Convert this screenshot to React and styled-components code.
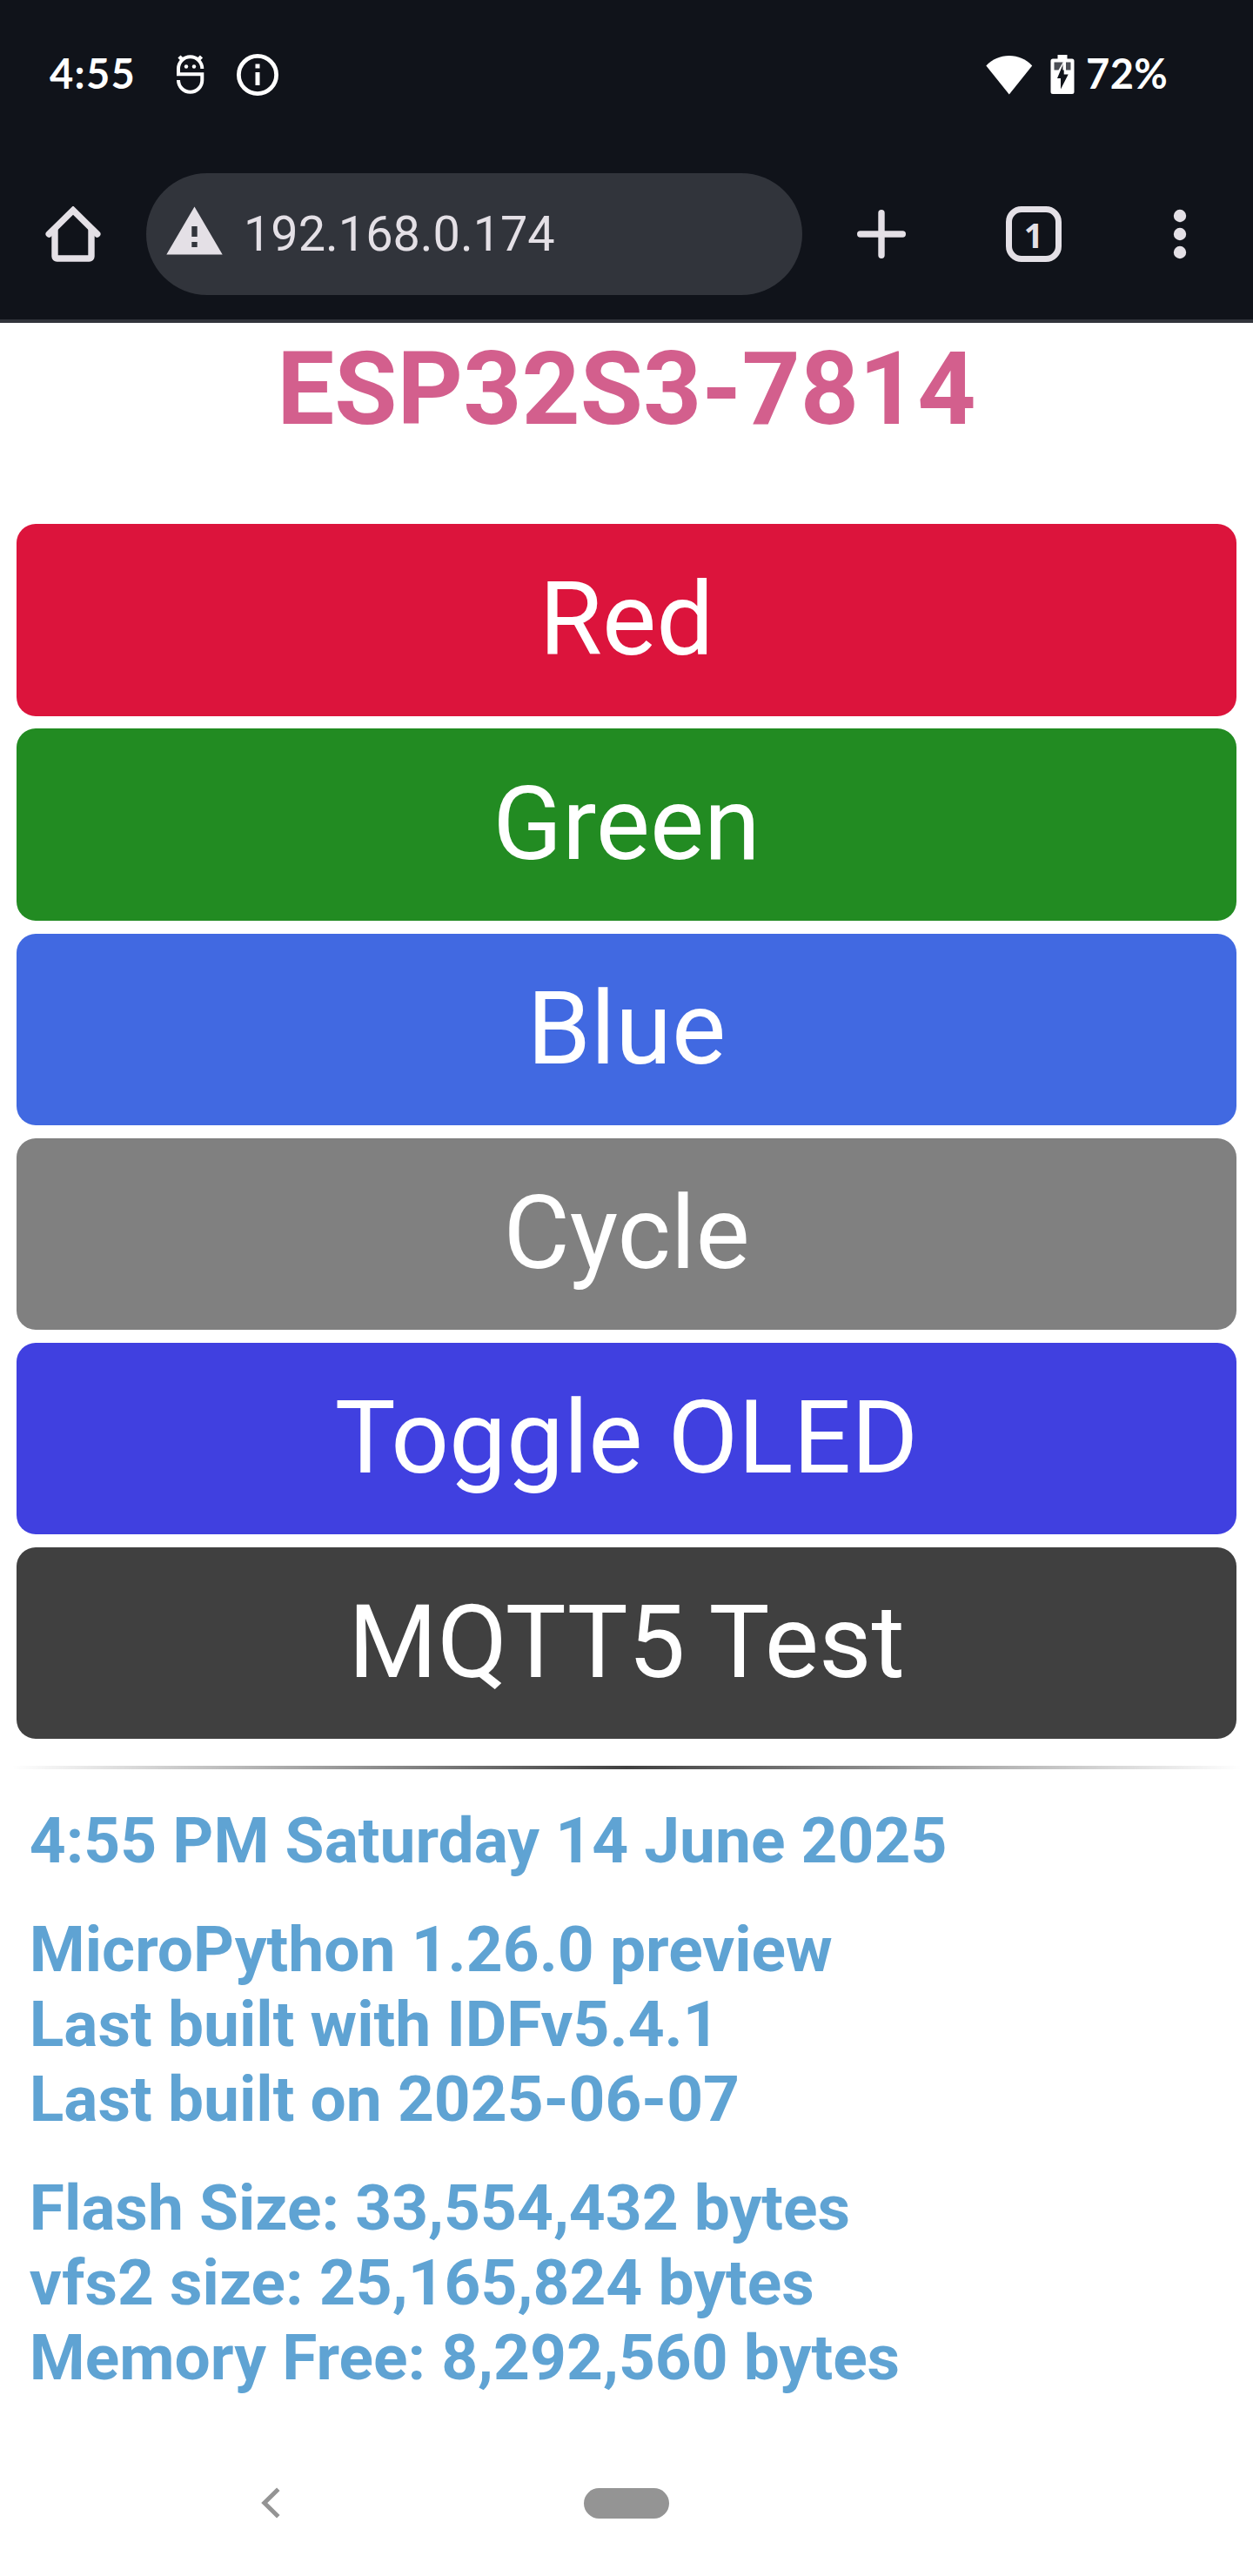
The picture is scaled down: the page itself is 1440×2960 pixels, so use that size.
import React from "react";
import styled, { createGlobalStyle } from "styled-components";

const Global = createGlobalStyle`
  *, *::before, *::after { box-sizing: border-box; }
  body { margin: 0; background: #fff; font-family: Roboto, sans-serif; }
`;

const Screen = styled.div`
  width: 1440px;
  height: 2960px;
  display: flex;
  flex-direction: column;
  background: #fff;
  overflow: hidden;
`;

const StatusBar = styled.header`
  height: 172px;
  padding: 0 100px 0 57px;
  background: #10131a;
  color: #fff;
  display: flex;
  justify-content: space-between;
`;

const StatusGroup = styled.div`
  display: flex;
  align-items: center;
  height: 172px;
`;

const StatusText = styled.span`
  font-family: Lato, sans-serif;
  font-weight: 700;
  font-size: 47px;
  line-height: 56px;
  padding-bottom: 4px;
  width: ${(p) => p.$w}px;
  margin-left: ${(p) => p.$gap || 0}px;
  letter-spacing: ${(p) => p.$ls || 0}px;
  white-space: nowrap;
`;

const Icon = styled.svg`
  display: block;
  flex: none;
  margin-left: ${(p) => p.$gap || 0}px;
`;

const Toolbar = styled.nav`
  height: 199px;
  padding: 27px 0 0 52px;
  background: #10131a;
  border-bottom: 4px solid #31343b;
  color: #e4e0e6;
  display: flex;
  align-items: flex-start;
`;

const ToolButton = styled.button`
  border: 0;
  padding: 0;
  background: none;
  color: inherit;
  width: 64px;
  height: 140px;
  display: flex;
  align-items: center;
  justify-content: center;
  margin-left: ${(p) => p.$gap || 0}px;
`;

const UrlBar = styled.div`
  width: 754px;
  height: 140px;
  margin-left: 52px;
  padding-left: 23px;
  border-radius: 70px;
  background: #31343b;
  display: flex;
  align-items: center;
`;

const Url = styled.span`
  margin-left: 24px;
  font-size: 55.8px;
  line-height: 66px;
`;

const TabCount = styled.span`
  width: 64px;
  height: 64px;
  border: 7.5px solid currentColor;
  border-radius: 18px;
  display: flex;
  align-items: center;
  justify-content: center;
  font-family: "Noto Sans", sans-serif;
  font-weight: 700;
  font-size: 39px;
  line-height: 49px;
`;

const Page = styled.main`
  flex: 1;
  padding: 0 19.4px;
`;

const Title = styled.h1`
  margin: 0;
  height: 231.4px;
  padding-top: 7.5px;
  font-size: 117.3px;
  line-height: 137px;
  font-weight: 700;
  text-align: center;
  color: #d35f8d;
`;

const ButtonList = styled.div`
  display: flex;
  flex-direction: column;
  gap: 14.7px;
`;

const ColorButton = styled.button`
  height: 220.4px;
  border: 0;
  padding: 0;
  border-radius: 22px;
  background: ${(p) => p.$color};
  color: #fff;
  font: 400 117.3px/137px Roboto, sans-serif;
`;

const Rule = styled.hr`
  height: 3.5px;
  margin: 31px -6px 0;
  border: 0;
  background: linear-gradient(to right, rgba(0, 0, 0, 0), rgba(0, 0, 0, 0.75), rgba(0, 0, 0, 0));
`;

const Info = styled.section`
  padding: 0 14.4px;
  margin-top: 39.5px;
  color: #5fa3d3;
  font-size: 73.1px;
  line-height: 86.2px;
  font-weight: 700;
`;

const InfoGroup = styled.p`
  margin: 0 0 38.3px;
`;

const Line = styled.span`
  display: block;
  white-space: nowrap;
`;

const NavBar = styled.footer`
  height: 168px;
  padding-left: 300px;
  display: flex;
  align-items: center;
`;

const HomePill = styled.span`
  width: 98px;
  height: 35px;
  margin-left: 347px;
  border-radius: 18px;
  background: #949494;
`;

const buttons = [
  ["Red", "#dc143c"],
  ["Green", "#228b22"],
  ["Blue", "#4169e1"],
  ["Cycle", "#808080"],
  ["Toggle OLED", "#4040e0"],
  ["MQTT5 Test", "#404040"],
];

const info = [
  ["4:55 PM Saturday 14 June 2025"],
  ["MicroPython 1.26.0 preview", "Last built with IDFv5.4.1", "Last built on 2025-06-07"],
  ["Flash Size: 33,554,432 bytes", "vfs2 size: 25,165,824 bytes", "Memory Free: 8,292,560 bytes"],
];

const DebugIcon = () => (
  <Icon $gap={46} width="32" height="48" viewBox="0 0 32 48" fill="none" stroke="#fff" strokeWidth="4">
    <path d="M29.300 17A13.600 13.600 0 0 0 2 17V23.300H29.300V30a13.600 13.700 0 0 1-27.300 0" />
    <path d="M7.500 7.500 3 3M24 7.500 28.500 3" strokeWidth="4.500" />
    <circle cx="11" cy="14.500" r="2.200" fill="#fff" stroke="none" />
    <circle cx="20" cy="14.500" r="2.200" fill="#fff" stroke="none" />
  </Icon>
);

const InfoIcon = () => (
  <Icon $gap={37} width="48" height="48" viewBox="0 0 48 48">
    <circle cx="24" cy="24" r="21.600" fill="none" stroke="#fff" strokeWidth="4.800" />
    <path d="M21.500 11.500h5v5h-5zM21.500 21h5v15h-5z" fill="#fff" />
  </Icon>
);

const WifiIcon = () => (
  <Icon width="54" height="46" viewBox="0 0 54 46">
    <path d="M.300 12.500C7.500 5 16.500 1 26.800 1s19.300 4 26.400 11.500L26.800 45.500z" fill="#fff" />
  </Icon>
);

const BatteryIcon = () => (
  <Icon $gap={20} width="28" height="48" viewBox="0 0 28 48">
    <path d="M8.500 1h11v4.500H25a2.500 2.500 0 0 1 2.500 2.500v35.500a2.500 2.500 0 0 1-2.500 2.500H3A2.500 2.500 0 0 1 .500 43.500V8A2.500 2.500 0 0 1 3 5.500h5.500z" fill="#fff" />
    <path d="M4.500 9.500h10.200L9.500 18.500h-5zM18 9.500h5.500v9H18z" fill="#4b4e55" />
    <path d="M15.700 9.500v14h5L12 40.500V28H8z" fill="#10131a" />
    <path d="M15.700 10v8.500" stroke="#fff" strokeWidth="2.500" />
  </Icon>
);

const HomeIcon = () => (
  <svg width="64" height="64" viewBox="0 0 64 64" fill="none" stroke="currentColor" strokeWidth="7.400" strokeLinecap="round">
    <path d="M4.200 32 32 4.600 59.800 32" strokeLinejoin="miter" />
    <path d="M11 26v31.500a2.500 2.500 0 0 0 2.500 2.500h37a2.500 2.500 0 0 0 2.500-2.500V26" strokeLinecap="butt" />
  </svg>
);

const WarningIcon = () => (
  <Icon width="65" height="64" viewBox="0 0 65 64">
    <path fillRule="evenodd" d="M32.500 .500 64.700 55.500H.300zM29.300 23v12h6.400V23zM29.300 41v6h6.400v-6z" fill="currentColor" />
  </Icon>
);

export default function App() {
  return (
    <>
      <Global />
      <Screen>
        <StatusBar>
          <StatusGroup>
            <StatusText $w={100} $ls={1.3}>4:55</StatusText>
            <DebugIcon />
            <InfoIcon />
          </StatusGroup>
          <StatusGroup>
            <WifiIcon />
            <BatteryIcon />
            <StatusText $w={92} $gap={13} $ls={0.4}>72%</StatusText>
          </StatusGroup>
        </StatusBar>
        <Toolbar>
          <ToolButton aria-label="Home"><HomeIcon /></ToolButton>
          <UrlBar>
            <WarningIcon />
            <Url>192.168.0.174</Url>
          </UrlBar>
          <ToolButton aria-label="New tab" $gap={59}>
            <svg width="64" height="64" viewBox="0 0 64 64" stroke="currentColor" strokeWidth="7.400" strokeLinecap="round">
              <path d="M7.700 32h48.600M32 7.700v48.600" />
            </svg>
          </ToolButton>
          <ToolButton aria-label="Tabs" $gap={111}><TabCount>1</TabCount></ToolButton>
          <ToolButton aria-label="Menu" $gap={104}>
            <svg width="64" height="64" viewBox="0 0 64 64" fill="currentColor">
              <circle cx="32" cy="11" r="7.200" />
              <circle cx="32" cy="32" r="7.200" />
              <circle cx="32" cy="53" r="7.200" />
            </svg>
          </ToolButton>
        </Toolbar>
        <Page>
          <Title>ESP32S3-7814</Title>
          <ButtonList>
            {buttons.map(([label, color]) => (
              <ColorButton key={label} $color={color}>{label}</ColorButton>
            ))}
          </ButtonList>
          <Rule />
          <Info>
            {info.map((lines) => (
              <InfoGroup key={lines[0]}>
                {lines.map((line) => <Line key={line}>{line}</Line>)}
              </InfoGroup>
            ))}
          </Info>
        </Page>
        <NavBar>
          <Icon width="24" height="42" viewBox="0 0 24 42" fill="none" stroke="#949494" strokeWidth="5">
            <path d="M19.800 5.200 3.800 21 19.800 36.800" />
          </Icon>
          <HomePill />
        </NavBar>
      </Screen>
    </>
  );
}
